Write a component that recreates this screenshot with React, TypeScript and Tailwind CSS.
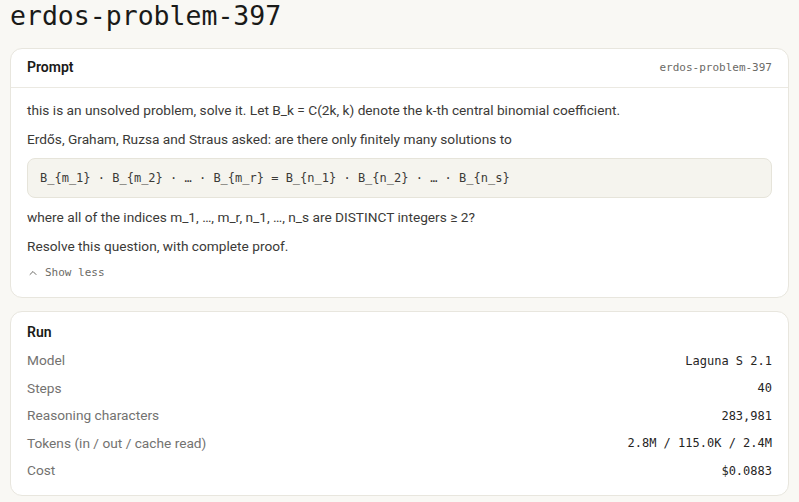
import { ChevronUp } from 'lucide-react';

const mono = "font-['DejaVu_Sans_Mono','Liberation_Mono',monospace]";
const sans = "font-['Roboto','Noto_Sans',sans-serif]";

const runRows = [
  { label: 'Model', value: 'Laguna S 2.1' },
  { label: 'Steps', value: '40' },
  { label: 'Reasoning characters', value: '283,981' },
  { label: 'Tokens (in / out / cache read)', value: '2.8M / 115.0K / 2.4M' },
  { label: 'Cost', value: '$0.0883' },
];

export default function App() {
  return (
    <div className={`min-h-screen bg-[#f9f8f4] px-[10px] ${sans}`}>
      <h1 className={`${mono} h-[48px] text-[26.5px] leading-[31px] text-[#1a1a18]`}>
        erdos-problem-397
      </h1>

      {/* Prompt card */}
      <section className="rounded-[12px] border border-[#e8e6de] bg-white">
        <header className="flex items-center justify-between border-b border-[#ebe9e2] px-4 h-[39px]">
          <span className="text-[14px] font-semibold text-[#1a1a18] -mt-[1px]">Prompt</span>
          <span className={`${mono} text-[11px] text-[#6b6a66]`}>erdos-problem-397</span>
        </header>
        <div className="flex flex-col gap-[9px] px-4 pt-[12px] pb-[16px] text-[13.7px] leading-[20px] text-[#3b3a37]">
          <p>this is an unsolved problem, solve it. Let B_k = C(2k, k) denote the k-th central binomial coefficient.</p>
          <p>Erdős, Graham, Ruzsa and Straus asked: are there only finitely many solutions to</p>
          <div className={`${mono} flex h-[40px] items-center rounded-[8px] border border-[#e6e4da] bg-[#f5f4ee] px-3 text-[12px] text-[#3b3a37]`}>
            {'B_{m_1} · B_{m_2} · … · B_{m_r} = B_{n_1} · B_{n_2} · … · B_{n_s}'}
          </div>
          <p>where all of the indices m_1, …, m_r, n_1, …, n_s are DISTINCT integers ≥ 2?</p>
          <p>Resolve this question, with complete proof.</p>
          <button className={`${mono} flex items-center gap-[6px] text-[11px] leading-[16px] text-[#6b6a66]`}>
            <ChevronUp size={12} strokeWidth={2} />
            Show less
          </button>
        </div>
      </section>

      {/* Run card */}
      <section className="mt-[13px] rounded-[12px] border border-[#e8e6de] bg-white px-4 pt-[10px] pb-[10px]">
        <h2 className="text-[14px] font-semibold leading-[20px] text-[#1a1a18]">Run</h2>
        <div className="mt-[5px] flex flex-col">
          {runRows.map((r) => (
            <div key={r.label} className="flex h-[27.5px] items-center justify-between">
              <span className="text-[13.7px] text-[#737270]">{r.label}</span>
              <span className={`${mono} text-[12px] text-[#26251f]`}>{r.value}</span>
            </div>
          ))}
        </div>
      </section>
    </div>
  );
}
